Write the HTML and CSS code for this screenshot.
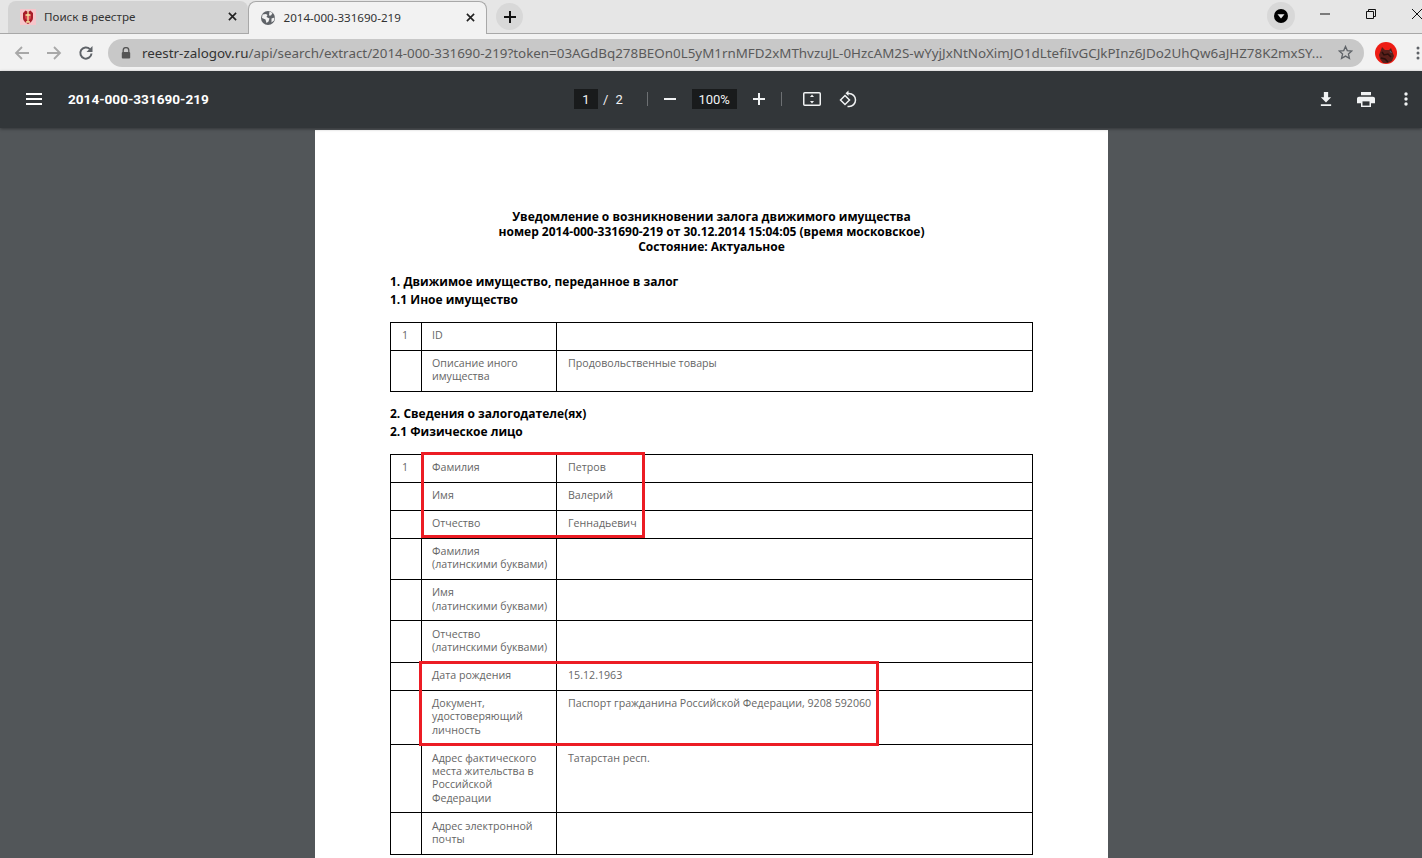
FILE: index.html
```html
<!DOCTYPE html>
<html lang="ru">
<head>
  <meta charset="UTF-8">
  <title>2014-000-331690-219</title>
  <link rel="stylesheet" href="styles.css">
</head>
<body>
  <div class="tabstrip">
    <div class="tab tab-inactive">
      <svg class="favicon" viewBox="0 0 16 16">
        <rect width="16" height="16" fill="#f6c6cb"/>
        <path d="M3 4l2.500-2.500L8 3l2.500-1.500L13 4v5q0 3.500-5 6-5-2.500-5-6z" fill="#a81c28"/>
        <circle cx="8" cy="8" r="3" fill="#d8404a"/>
        <path d="M8 2.500v10M5.500 6h5M6 13h4" stroke="#f4e2a0" stroke-width="1.300" fill="none"/>
      </svg>
      <span class="tab-title">Поиск в реестре</span>
      <svg class="tab-close" viewBox="0 0 10 10"><path d="M1 1l8 8M9 1l-8 8" stroke="#222" stroke-width="1.800"/></svg>
    </div>
    <div class="tab tab-active">
      <svg class="favicon" viewBox="0 0 16 16">
        <circle cx="8" cy="8" r="7" fill="#5f6368"/>
        <path d="M2.500 4.500L6 4l1.500 1-1 2 3 1.500-1 3-2 1.500-1-3.500L2 8zM9.500 1.500l3 1.500-1.500 2.500H9zM11.500 8.500l3-1-.5 3-2.500 2z" fill="#f2f2f2"/>
      </svg>
      <span class="tab-title">2014-000-331690-219</span>
      <svg class="tab-close" viewBox="0 0 10 10"><path d="M1 1l8 8M9 1l-8 8" stroke="#222" stroke-width="1.800"/></svg>
    </div>
    <div class="newtab">
      <svg width="12" height="12" viewBox="0 0 12 12"><path d="M6 0v12M0 6h12" stroke="#111" stroke-width="2"/></svg>
    </div>
    <div class="strip-space"></div>
    <div class="media-btn">
      <svg width="16" height="16" viewBox="0 0 16 16"><circle cx="8" cy="8" r="7" fill="#000"/><path d="M4.500 6.200h7L8 10.600z" fill="#e6e6e6"/></svg>
    </div>
    <div class="win-btns">
      <svg width="10" height="10" viewBox="0 0 10 10"><path d="M0 5h10" stroke="#111"/></svg>
      <svg width="10" height="10" viewBox="0 0 10 10"><path d="M.5 2.500h7v7h-7zM2.500 2.500v-2h7v7h-2" stroke="#111" fill="none"/></svg>
      <svg width="10" height="10" viewBox="0 0 10 10"><path d="M0 0l10 10M10 0L0 10" stroke="#111"/></svg>
    </div>
  </div>

  <div class="toolbar">
    <div class="nav-btns">
      <svg width="16" height="16" viewBox="0 0 16 16"><path d="M15 8H2M8 2L2 8l6 6" stroke="#a8a8a8" stroke-width="1.800" fill="none"/></svg>
      <svg width="16" height="16" viewBox="0 0 16 16"><path d="M1 8h13M8 2l6 6-6 6" stroke="#a8a8a8" stroke-width="1.800" fill="none"/></svg>
      <svg width="16" height="16" viewBox="0 0 16 16"><path d="M13.500 8.500a5.600 5.600 0 1 1-1.600-4.400" stroke="#5f6368" stroke-width="2" fill="none"/><path d="M14.500 1v6h-6z" fill="#5f6368"/></svg>
    </div>
    <div class="omnibox">
      <svg class="lock" width="10" height="12" viewBox="0 0 10 12"><path d="M2.200 5V3.400a2.800 2.800 0 0 1 5.600 0V5" stroke="#555" stroke-width="1.300" fill="none"/><rect x="0.800" y="5" width="8.400" height="6.600" rx="1" fill="#555"/></svg>
      <span class="url"><span class="url-host">reestr-zalogov.ru</span>/api/search/extract/2014-000-331690-219?token=03AGdBq278BEOn0L5yM1rnMFD2xMThvzuJL-0HzcAM2S-wYyjJxNtNoXimJO1dLtefiIvGCJkPInz6JDo2UhQw6aJHZ78K2mxSY...</span>
      <svg width="15" height="15" viewBox="0 0 16 16"><path d="M8 1.600l1.900 4.400 4.800.4-3.600 3.200 1.100 4.700L8 11.800l-4.200 2.500 1.100-4.700L1.300 6.400l4.800-.4z" stroke="#5f6368" stroke-width="1.400" fill="none"/></svg>
    </div>
    <svg class="avatar" width="22" height="22" viewBox="0 0 22 22">
      <circle cx="11" cy="11" r="11" fill="#ee1c14"/>
      <path d="M4 13l2-5 1-3 3 3h4l2-2 3 8-2 5-4 2H8l-3-4z" fill="#5a1f1a"/>
      <path d="M7 10l2 3 4-1 3 3M6 16l4 1 3 3" stroke="#2c0f0c" stroke-width="1.500" fill="none"/>
      <path d="M15 9l1.500 2" stroke="#4a6a8a" stroke-width="1"/>
    </svg>
    <svg class="chrome-menu" width="4" height="14" viewBox="0 0 4 14"><circle cx="2" cy="2" r="1.500" fill="#5f6368"/><circle cx="2" cy="7" r="1.500" fill="#5f6368"/><circle cx="2" cy="12" r="1.500" fill="#5f6368"/></svg>
  </div>

  <div class="pdf-bar">
    <div class="pdf-left">
      <svg width="16" height="12" viewBox="0 0 16 12"><path d="M0 1h16M0 6h16M0 11h16" stroke="#fff" stroke-width="2"/></svg>
      <span class="pdf-title">2014-000-331690-219</span>
    </div>
    <div class="pdf-center">
      <span class="pdf-box page-box">1</span>
      <span class="page-slash">/</span>
      <span class="page-total">2</span>
      <span class="pdf-sep sep-first"></span>
      <svg class="zoom-minus" width="12" height="12" viewBox="0 0 12 12"><path d="M0 6h12" stroke="#f1f3f4" stroke-width="2"/></svg>
      <span class="pdf-box zoom-box">100%</span>
      <svg class="zoom-plus" width="12" height="12" viewBox="0 0 12 12"><path d="M0 6h12M6 0v12" stroke="#f1f3f4" stroke-width="2"/></svg>
      <span class="pdf-sep sep-second"></span>
      <svg class="fit-icon" width="18" height="14" viewBox="0 0 18 14"><rect x=".75" y=".75" width="16.500" height="12.500" rx="1" stroke="#f1f3f4" stroke-width="1.500" fill="none"/><path d="M9 2.500l2 2.500H7zM9 11.500L7 9h4z" fill="#f1f3f4"/></svg>
      <svg class="rotate-icon" width="18" height="18" viewBox="0 0 18 18"><path d="M1.500 10L6 5.500l4.500 4.500L6 14.500z" stroke="#f1f3f4" stroke-width="1.500" fill="none"/><path d="M8 3.500h2a6.500 6.500 0 0 1 0 13H8.500" stroke="#f1f3f4" stroke-width="1.500" fill="none"/><path d="M9.500 0.500v5.500l-3-2.800z" fill="#f1f3f4"/></svg>
    </div>
    <div class="pdf-right">
      <svg class="download-icon" width="12" height="14" viewBox="0 0 14 16" preserveAspectRatio="none"><path d="M4.500 0h5v6H13L7 12 1 6h3.500zM1 14h12v2H1z" fill="#f1f3f4"/></svg>
      <svg class="print-icon" width="18" height="15" viewBox="0 0 18 16" preserveAspectRatio="none"><path d="M4 0h10v3.500H4zM2 5h14a2 2 0 0 1 2 2v5h-4v4H4v-4H0V7a2 2 0 0 1 2-2z" fill="#f1f3f4"/><rect x="5.500" y="10" width="7" height="4.500" fill="#323639"/></svg>
      <svg class="more-icon" width="4" height="14" viewBox="0 0 4 14"><circle cx="2" cy="2" r="1.700" fill="#f1f3f4"/><circle cx="2" cy="7" r="1.700" fill="#f1f3f4"/><circle cx="2" cy="12" r="1.700" fill="#f1f3f4"/></svg>
    </div>
  </div>

  <div class="viewer">
    <div class="page">
      <div class="doc-title">
        Уведомление о возникновении залога движимого имущества<br>
        номер 2014-000-331690-219 от 30.12.2014 15:04:05 (время московское)<br>
        Состояние: Актуальное
      </div>
      <div class="section-head">
        1. Движимое имущество, переданное в залог<br>
        1.1 Иное имущество
      </div>
      <table class="doc-table">
        <tr><td class="num">1</td><td class="name">ID</td><td></td></tr>
        <tr><td class="num"></td><td class="name">Описание иного имущества</td><td>Продовольственные товары</td></tr>
      </table>
      <div class="section-head">
        2. Сведения о залогодателе(ях)<br>
        2.1 Физическое лицо
      </div>
      <div class="table-wrap">
        <table class="doc-table">
          <tr><td class="num">1</td><td class="name">Фамилия</td><td>Петров</td></tr>
          <tr><td class="num"></td><td class="name">Имя</td><td>Валерий</td></tr>
          <tr><td class="num"></td><td class="name">Отчество</td><td>Геннадьевич</td></tr>
          <tr><td class="num"></td><td class="name">Фамилия<br>(латинскими буквами)</td><td></td></tr>
          <tr><td class="num"></td><td class="name">Имя<br>(латинскими буквами)</td><td></td></tr>
          <tr><td class="num"></td><td class="name">Отчество<br>(латинскими буквами)</td><td></td></tr>
          <tr><td class="num"></td><td class="name">Дата рождения</td><td>15.12.1963</td></tr>
          <tr><td class="num"></td><td class="name">Документ, удостоверяющий личность</td><td>Паспорт гражданина Российской Федерации, 9208 592060</td></tr>
          <tr><td class="num"></td><td class="name">Адрес фактического места жительства в Российской Федерации</td><td>Татарстан респ.</td></tr>
          <tr><td class="num"></td><td class="name">Адрес электронной почты</td><td></td></tr>
        </table>
        <div class="mark mark-name"></div>
        <div class="mark mark-doc"></div>
      </div>
    </div>
  </div>
</body>
</html>
```

FILE: styles.css
```css
* {
  box-sizing: border-box;
}
html, body {
  margin: 0;
  height: 858px;
  overflow: hidden;
}
body {
  font-family: 'Open Sans', sans-serif;
  background-color: #525659;
}
svg {
  display: block;
  flex: none;
}

/* tab strip */
.tabstrip {
  height: 34px;
  background-color: #e6e6e6;
  border-bottom: 1px solid #a8a8a8;
  display: flex;
  align-items: flex-end;
  padding-left: 8px;
}
.tab {
  width: 239.500px;
  height: 33px;
  display: flex;
  align-items: center;
  padding: 0 11px 1px 12px;
  margin-bottom: -1px;
  font-family: 'Noto Sans', sans-serif;
  font-size: 11.600px;
  color: #333;
}
.tab-inactive {
  background-color: #d3d3d3;
  border-radius: 8px 8px 0 0;
  border-bottom: 1px solid #a8a8a8;
}
.tab-active {
  background-color: #f2f2f2;
  border: 1px solid #a8a8a8;
  border-bottom: none;
  border-radius: 8px 8px 0 0;
  padding-left: 11px;
}
.favicon {
  width: 16px;
  height: 16px;
  margin-right: 8px;
}
.tab-title {
  flex: 1;
  white-space: nowrap;
}
.tab-close {
  width: 9px;
  height: 9px;
}
.newtab {
  width: 27px;
  height: 27px;
  margin: 0 0 3px 9px;
  border-radius: 50%;
  background-color: #d8d8d8;
  display: flex;
  align-items: center;
  justify-content: center;
}
.strip-space {
  flex: 1;
}
.media-btn {
  width: 28px;
  height: 28px;
  margin-bottom: 3px;
  border-radius: 50%;
  background-color: #d8d8d8;
  display: flex;
  align-items: center;
  justify-content: center;
}
.win-btns {
  display: flex;
  gap: 36px;
  align-items: center;
  width: 127px;
  height: 33px;
  padding: 0 0 5px 25px;
}

/* address bar */
.toolbar {
  height: 37px;
  background-color: #f2f2f2;
  display: flex;
  align-items: center;
  padding-left: 14px;
}
.nav-btns {
  display: flex;
  gap: 16px;
  width: 94px;
}
.omnibox {
  width: 1256px;
  height: 28px;
  border-radius: 14px;
  background-color: #c8c8c8;
  display: flex;
  align-items: center;
  padding: 0 11px 0 13px;
  font-family: 'Noto Sans', sans-serif;
  font-size: 13.380px;
  color: #5a5a5a;
}
.url {
  flex: 1;
  margin-left: 11px;
  white-space: nowrap;
  overflow: hidden;
}
.url-host {
  color: #333;
}
.avatar {
  margin-left: 11px;
}
.chrome-menu {
  margin-left: 19px;
}

/* pdf viewer toolbar */
.pdf-bar {
  height: 57px;
  background-color: #323639;
  color: #f1f3f4;
  font-family: Roboto, sans-serif;
  display: flex;
  align-items: center;
  padding: 0 14px 1px 26px;
  box-shadow: 0 1px 3px rgba(0, 0, 0, .4);
  position: relative;
}
.pdf-left {
  width: 548px;
  display: flex;
  align-items: center;
  gap: 26px;
}
.pdf-title {
  font-size: 13.600px;
  font-weight: 700;
  color: #fff;
}
.pdf-center {
  display: flex;
  align-items: center;
  font-size: 13px;
}
.pdf-box {
  height: 20px;
  background-color: #191b1c;
  display: flex;
  align-items: center;
  justify-content: center;
}
.page-box {
  width: 24px;
}
.page-slash {
  margin-left: 5px;
}
.page-total {
  margin-left: 7px;
}
.pdf-sep {
  width: 1px;
  height: 14px;
  background-color: #6d7073;
}
.sep-first {
  margin-left: 24px;
}
.zoom-minus {
  margin-left: 16px;
}
.zoom-box {
  width: 45px;
  margin-left: 16px;
}
.zoom-plus {
  margin-left: 16px;
}
.sep-second {
  margin-left: 16px;
}
.fit-icon {
  margin-left: 21px;
}
.rotate-icon {
  margin-left: 18px;
}
.pdf-right {
  margin-left: auto;
  display: flex;
  align-items: center;
}
.print-icon {
  margin-left: 25px;
}
.more-icon {
  margin-left: 29px;
}

/* document */
.viewer {
  padding-top: 2px;
}
.page {
  width: 793px;
  height: 728px;
  margin-left: 315px;
  background-color: #fff;
  padding: 79px 75px 0;
}
.doc-title {
  font-size: 12px;
  line-height: 15px;
  font-weight: 700;
  text-align: center;
  color: #000;
  margin-bottom: 19px;
}
.section-head {
  font-size: 12px;
  line-height: 18px;
  font-weight: 700;
  color: #000;
  margin: 13px 0;
}
.doc-table {
  width: 643px;
  border-collapse: collapse;
  table-layout: fixed;
  font-size: 10.650px;
  line-height: 13.400px;
  color: #666;
}
.doc-table td {
  border: 1px solid #000;
  padding: 6.200px 6px 7.300px 11px;
  vertical-align: top;
}
.doc-table td:first-child {
  width: 31px;
  padding: 6.200px 2px 7.300px 0;
  text-align: center;
}
.doc-table td.name {
  width: 135px;
  padding-left: 10px;
}
.table-wrap {
  position: relative;
}
.mark {
  position: absolute;
  border: 3px solid #ec1c24;
}
.mark-name {
  left: 31px;
  top: -2px;
  width: 224px;
  height: 86px;
}
.mark-doc {
  left: 29px;
  top: 207px;
  width: 460px;
  height: 85px;
}
```
